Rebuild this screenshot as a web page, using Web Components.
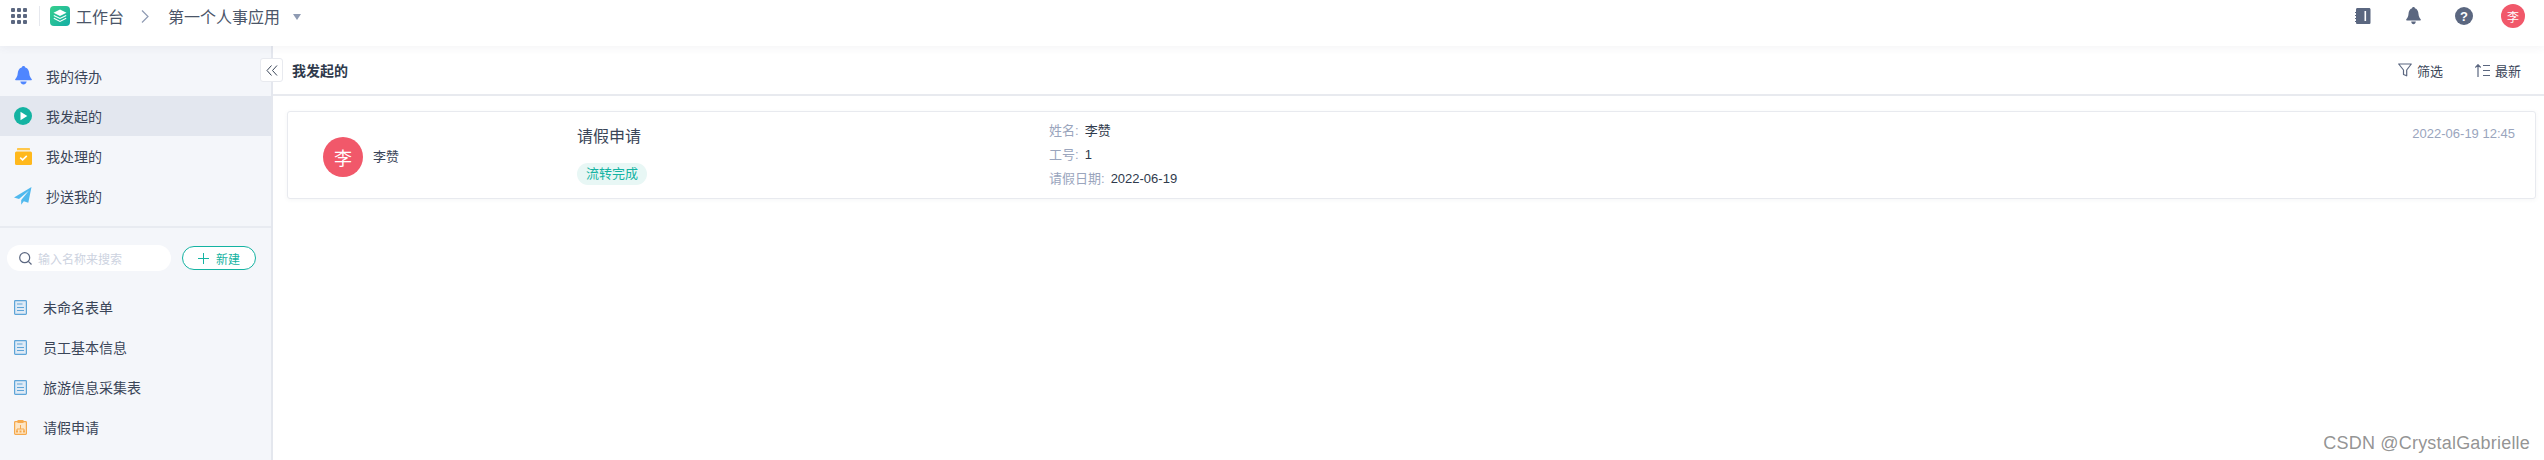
<!DOCTYPE html>
<html>
<head>
<meta charset="utf-8">
<style>
  html, body { margin: 0; padding: 0; height: 100%; background: #fff; overflow: hidden; }
  body { font-family: "Liberation Sans", "Noto Sans CJK SC", sans-serif; color: #2f3a4c; }
  app-shell { height: 460px; }
</style>
</head>
<body>
<app-shell>
  <top-bar slot="top"></top-bar>
  <side-nav slot="side"></side-nav>
  <main-panel slot="main"></main-panel>
</app-shell>
<script>
// small helper, every element has the same shadow setup
function mount(el, html) {
  el.attachShadow({ mode: 'open' });
  const t = document.createElement('template');
  t.innerHTML = html;
  el.shadowRoot.appendChild(t.content.cloneNode(true));
}

const ICONS = {
  bell: '<svg width="17" height="20" viewBox="0 0 17 20"><path d="M8.5 0c1 0 1.600.6 1.800 1.500C13 2.300 14 4.600 14.300 7.500c.2 2.500 1 4 2.300 5.400.5.6.4 1.300-.4 1.300H.8c-.8 0-.9-.7-.4-1.300C1.700 11.500 2.500 10 2.700 7.500 3 4.600 4 2.300 6.700 1.500 6.900.6 7.500 0 8.500 0z" fill="#4f86ff"/><path d="M5.300 15.600h6.400c-.4 1.900-1.700 2.900-3.200 2.900s-2.800-1-3.200-2.900z" fill="#4f86ff"/></svg>',
  play: '<svg width="18" height="18" viewBox="0 0 18 18"><circle cx="9" cy="9" r="9" fill="#14b3a2"/><path d="M6.500 4.700v8.600L13.300 9z" fill="#fff"/></svg>',
  box: '<svg width="17" height="17" viewBox="0 0 17 17"><path d="M3 0h11c.6 0 1 .4 1 1v1.200H2V1c0-.6.4-1 1-1z" fill="#ffc74a"/><rect x="0" y="3.400" width="17" height="13.600" rx="1.500" fill="#ffb81c"/><path d="M5.200 9.600l2.400 2.300 4.200-4" fill="none" stroke="#fff" stroke-width="1.500"/></svg>',
  plane: '<svg width="18" height="18" viewBox="0 0 18 18"><path d="M17.500 0L0 10.500l5 1.600L15 3.500 7.200 13l0 4.800 2.600-3.500 4.500 1.500z" fill="#50b9ee"/></svg>',
  doc: '<svg width="13" height="15" viewBox="0 0 13 15"><rect x=".6" y=".6" width="11.800" height="13.800" rx=".8" fill="#dfeaf5" stroke="#5ea5d8" stroke-width="1.200"/><path d="M3 4h5.500M3 7.500h7M3 10.500h7" stroke="#5ea5d8" stroke-width="1"/></svg>',
  flow: '<svg width="13" height="15" viewBox="0 0 13 15"><rect x=".6" y="1.600" width="11.800" height="12.800" rx=".8" fill="#fde6c6" stroke="#f5a94c" stroke-width="1.200"/><rect x="3.500" y="0" width="6" height="3" fill="#f5a94c"/><path d="M6.500 5v4M3 11V9h7v2" fill="none" stroke="#f5a94c" stroke-width="1"/><path d="M2 10.500h2v2H2zM5.500 10.500h2v2h-2zM9 10.500h2v2H9z" fill="#f5a94c"/></svg>'
};

class AppShell extends HTMLElement {
  constructor() {
    super();
    mount(this, `
      <style>
        :host { display: grid; grid-template-columns: 273px 1fr; grid-template-rows: 46px 1fr; width: 100%; position: relative; }
        .top { grid-column: 1 / 3; position: relative; z-index: 2; }
        .mark { position: absolute; right: 14px; bottom: 6px; font: 18px "Liberation Sans", sans-serif; color: rgba(120,120,120,.8); letter-spacing: .2px; }
      </style>
      <div class="top"><slot name="top"></slot></div>
      <slot name="side"></slot>
      <slot name="main"></slot>
      <div class="mark">CSDN @CrystalGabrielle</div>
    `);
  }
}

class TopBar extends HTMLElement {
  constructor() {
    super();
    mount(this, `
      <style>
        :host { display: flex; align-items: center; height: 46px; background: #fff; box-shadow: 0 2px 8px rgba(60,70,100,.06); padding: 0 0 14px 11px; box-sizing: border-box; color: #4a5568; }
        .apps { display: grid; grid-template-columns: repeat(3, 4px); gap: 2px; width: 16px; }
        .apps i { height: 4px; width: 4px; background: #5b6780; border-radius: 1px; }
        .sep { width: 1px; height: 20px; background: #e6e8ee; margin: 0 10px 0 12px; }
        .name { font-size: 16px; margin-left: 6px; }
        .chev { margin: 0 19px 0 17px; display: flex; }
        .caret { width: 0; height: 0; border: 4.500px solid transparent; border-top: 6px solid #8f9bb3; border-bottom: 0; margin-left: 13px; margin-top: 1px; }
        .right { margin-left: auto; display: flex; align-items: center; margin-right: 19px; }
        .right svg { display: block; }
        .avatar { width: 24px; height: 24px; border-radius: 50%; background: #f1586a; color: #fff; font-size: 12px; display: flex; align-items: center; justify-content: center; margin-left: 28px; }
        .gap { margin-left: 35px; }
      </style>
      <div class="apps">${'<i></i>'.repeat(9)}</div>
      <div class="sep"></div>
      <svg width="20" height="20" viewBox="0 0 20 20">
        <defs><linearGradient id="lg" x1="0" y1="0" x2="1" y2="1"><stop offset="0" stop-color="#37cf8c"/><stop offset="1" stop-color="#13ada6"/></linearGradient></defs>
        <rect width="20" height="20" rx="4" fill="url(#lg)"/>
        <path d="M10 3.500l6.500 3.300L10 10 3.500 6.800z" fill="#fff"/>
        <path d="M3.800 9.400L10 12.500l6.200-3.100M3.800 12.300L10 15.400l6.200-3.100" fill="none" stroke="#fff" stroke-width="1.100"/>
      </svg>
      <span class="name">工作台</span>
      <span class="chev"><svg width="8" height="13" viewBox="0 0 8 13"><path d="M1 .5L7 6.500l-6 6" fill="none" stroke="#8f9bb3" stroke-width="1.200"/></svg></span>
      <span class="name" style="margin-left:0">第一个人事应用</span>
      <span class="caret"></span>
      <div class="right">
        <svg width="16" height="16" viewBox="0 0 16 16"><path d="M2.500 0H14c1 0 1.500.6 1.500 1.500v13c0 1-.5 1.500-1.500 1.500H2.500c-1 0-1.500-.5-1.500-1.500V14H0v-1h1v-2H0v-1h1V8H0V7h1V5H0V4h1V1.500C1 .6 1.500 0 2.500 0z" fill="#5b6780"/><rect x="9.500" y="3" width="1.600" height="10" fill="#fff"/></svg>
        <svg class="gap" width="15" height="18" viewBox="0 0 15 18"><path d="M7.500 0c.8 0 1.300.5 1.400 1.200C11.400 2 12.300 4.300 12.500 7c.2 2.300.8 3.700 2 5 .6.700.5 1.500-.4 1.500H.9c-.9 0-1-.8-.4-1.500 1.200-1.300 1.800-2.700 2-5C2.700 4.300 3.600 2 6.100 1.200 6.200.5 6.700 0 7.500 0z" fill="#5b6780"/><path d="M5.200 14.500h4.600c-.2 1.800-1.100 2.800-2.300 2.800s-2.100-1-2.300-2.800z" fill="#5b6780"/></svg>
        <svg class="gap" style="margin-left:34px" width="18" height="18" viewBox="0 0 18 18"><circle cx="9" cy="9" r="9" fill="#5b6780"/><text x="9" y="13.500" text-anchor="middle" font-family="Liberation Sans" font-weight="700" font-size="13" fill="#fff">?</text></svg>
        <div class="avatar">李</div>
      </div>
    `);
  }
}

class NavItem extends HTMLElement {
  constructor() {
    super();
    const active = this.hasAttribute('active');
    mount(this, `
      <style>
        :host { display: flex; align-items: center; height: 40px; padding-left: 14px; font-size: 14px; color: #3a4558; background: ${active ? '#e3e7ef' : 'transparent'}; }
        .ic { width: 18px; display: flex; justify-content: center; margin-right: 14px; }
      </style>
      <div class="ic">${ICONS[this.getAttribute('icon')]}</div>
      <span><slot></slot></span>
    `);
  }
}

class FormItem extends HTMLElement {
  constructor() {
    super();
    mount(this, `
      <style>
        :host { display: flex; align-items: center; height: 40px; padding-left: 14px; font-size: 14px; color: #3a4558; }
        .ic { width: 14px; display: flex; margin-right: 15px; }
      </style>
      <div class="ic">${ICONS[this.getAttribute('icon')]}</div>
      <span><slot></slot></span>
    `);
  }
}

class SideNav extends HTMLElement {
  constructor() {
    super();
    mount(this, `
      <style>
        :host { display: block; background: #f4f6fa; border-right: 2px solid #e4e7ee; box-sizing: border-box; padding-top: 10px; height: 414px; }
        .div { height: 2px; background: #e8ebf1; margin-top: 10px; }
        .tools { display: flex; align-items: center; padding: 17px 0 0 7px; height: 26px; margin-bottom: 16px; }
        .search { width: 164px; height: 26px; border-radius: 13px; background: #fff; display: flex; align-items: center; box-sizing: border-box; padding-left: 12px; font-size: 12px; color: #cdd3df; }
        .search svg { margin-right: 6px; }
        .new { width: 74px; height: 24px; box-sizing: border-box; margin-left: 11px; border: 1px solid #14b3a2; border-radius: 12px; background: #fff; color: #14b3a2; font-size: 12px; display: flex; align-items: center; justify-content: center; }
        .new svg { margin-right: 7px; }
      </style>
      <nav-item icon="bell">我的待办</nav-item>
      <nav-item icon="play" active>我发起的</nav-item>
      <nav-item icon="box">我处理的</nav-item>
      <nav-item icon="plane">抄送我的</nav-item>
      <div class="div"></div>
      <div class="tools">
        <div class="search">
          <svg width="13" height="13" viewBox="0 0 13 13"><circle cx="5.700" cy="5.700" r="5" fill="none" stroke="#5b6780" stroke-width="1.200"/><path d="M9.300 9.300L12.500 12.500" stroke="#5b6780" stroke-width="1.200"/></svg>
          输入名称来搜索
        </div>
        <div class="new">
          <svg width="11" height="11" viewBox="0 0 11 11"><path d="M5.500 0v11M0 5.500h11" stroke="#14b3a2" stroke-width="1"/></svg>
          新建
        </div>
      </div>
      <form-item icon="doc">未命名表单</form-item>
      <form-item icon="doc">员工基本信息</form-item>
      <form-item icon="doc">旅游信息采集表</form-item>
      <form-item icon="flow">请假申请</form-item>
    `);
  }
}

class RecordCard extends HTMLElement {
  constructor() {
    super();
    mount(this, `
      <style>
        :host { display: grid; grid-template-columns: 289px 472px 1fr auto; height: 88px; box-sizing: border-box; margin: 15px 8px 0 14px; background: #fff; border: 1px solid #e8eaef; border-radius: 3px; box-shadow: 0 1px 4px rgba(60,70,100,.05); padding-right: 20px; }
        .who { display: flex; align-items: center; padding: 3px 0 0 35px; }
        .avatar { width: 40px; height: 40px; border-radius: 50%; background: #f1586a; color: #fff; font-size: 18px; display: flex; align-items: center; justify-content: center; margin-right: 10px; }
        .who span { font-size: 13px; color: #3a4558; margin-bottom: 3px; }
        .what { display: flex; flex-direction: column; align-items: flex-start; padding-top: 13px; }
        .title { font-size: 16px; line-height: 24px; color: #3a4558; }
        .tag { margin-top: 14px; height: 22px; line-height: 22px; padding: 0 9px; border-radius: 11px; background: #e8f7f5; color: #14b3a2; font-size: 13px; }
        .fields { padding-top: 7px; font-size: 13px; line-height: 24px; color: #2f3a4c; }
        .fields b { font-weight: 400; color: #9aa5bd; margin-right: 6px; }
        .time { padding-top: 13px; font-size: 13px; line-height: 18px; color: #9aa5bd; }
      </style>
      <div class="who"><div class="avatar">李</div><span>李赞</span></div>
      <div class="what"><div class="title">请假申请</div><div class="tag">流转完成</div></div>
      <div class="fields">
        <div><b>姓名:</b>李赞</div>
        <div><b>工号:</b>1</div>
        <div><b>请假日期:</b>2022-06-19</div>
      </div>
      <div class="time">2022-06-19 12:45</div>
    `);
  }
}

class MainPanel extends HTMLElement {
  constructor() {
    super();
    mount(this, `
      <style>
        :host { display: block; position: relative; background: #fff; }
        .head { display: flex; align-items: center; height: 50px; box-sizing: border-box; border-bottom: 2px solid #e8eaef; padding: 0 23px 0 19px; }
        h1 { margin: 0; font-size: 14px; font-weight: 700; color: #2f3a4c; }
        .act { display: flex; align-items: center; font-size: 13px; color: #3a4558; }
        .act svg { margin-right: 5px; }
        .collapse { position: absolute; left: -13px; top: 12px; width: 23px; height: 24px; box-sizing: border-box; background: #fff; border: 1px solid #e8eaef; border-radius: 3px; display: flex; align-items: center; justify-content: center; }
      </style>
      <div class="collapse"><svg width="12" height="11" viewBox="0 0 12 11"><path d="M5.500.5L1 5.500l4.500 5M11 .5L6.500 5.500l4.500 5" fill="none" stroke="#3a4558" stroke-width="1"/></svg></div>
      <div class="head">
        <h1>我发起的</h1>
        <div class="act" style="margin-left:auto">
          <svg width="14" height="14" viewBox="0 0 14 14"><path d="M.7 1h12.600L8.700 7v5.800L5.500 11.500V7z" fill="none" stroke="#5b6780" stroke-width="1.200" stroke-linejoin="round"/></svg>
          筛选
        </div>
        <div class="act" style="margin-left:32px">
          <svg width="15" height="13" viewBox="0 0 15 13"><path d="M3 13V1M.3 3.500L3 .7l2.700 2.800M8 1.500h7M8 6.500h7M8 11.500h7" fill="none" stroke="#5b6780" stroke-width="1.200"/></svg>
          最新
        </div>
      </div>
      <record-card></record-card>
    `);
  }
}

customElements.define('app-shell', AppShell);
customElements.define('top-bar', TopBar);
customElements.define('nav-item', NavItem);
customElements.define('form-item', FormItem);
customElements.define('side-nav', SideNav);
customElements.define('record-card', RecordCard);
customElements.define('main-panel', MainPanel);
</script>
</body>
</html>
